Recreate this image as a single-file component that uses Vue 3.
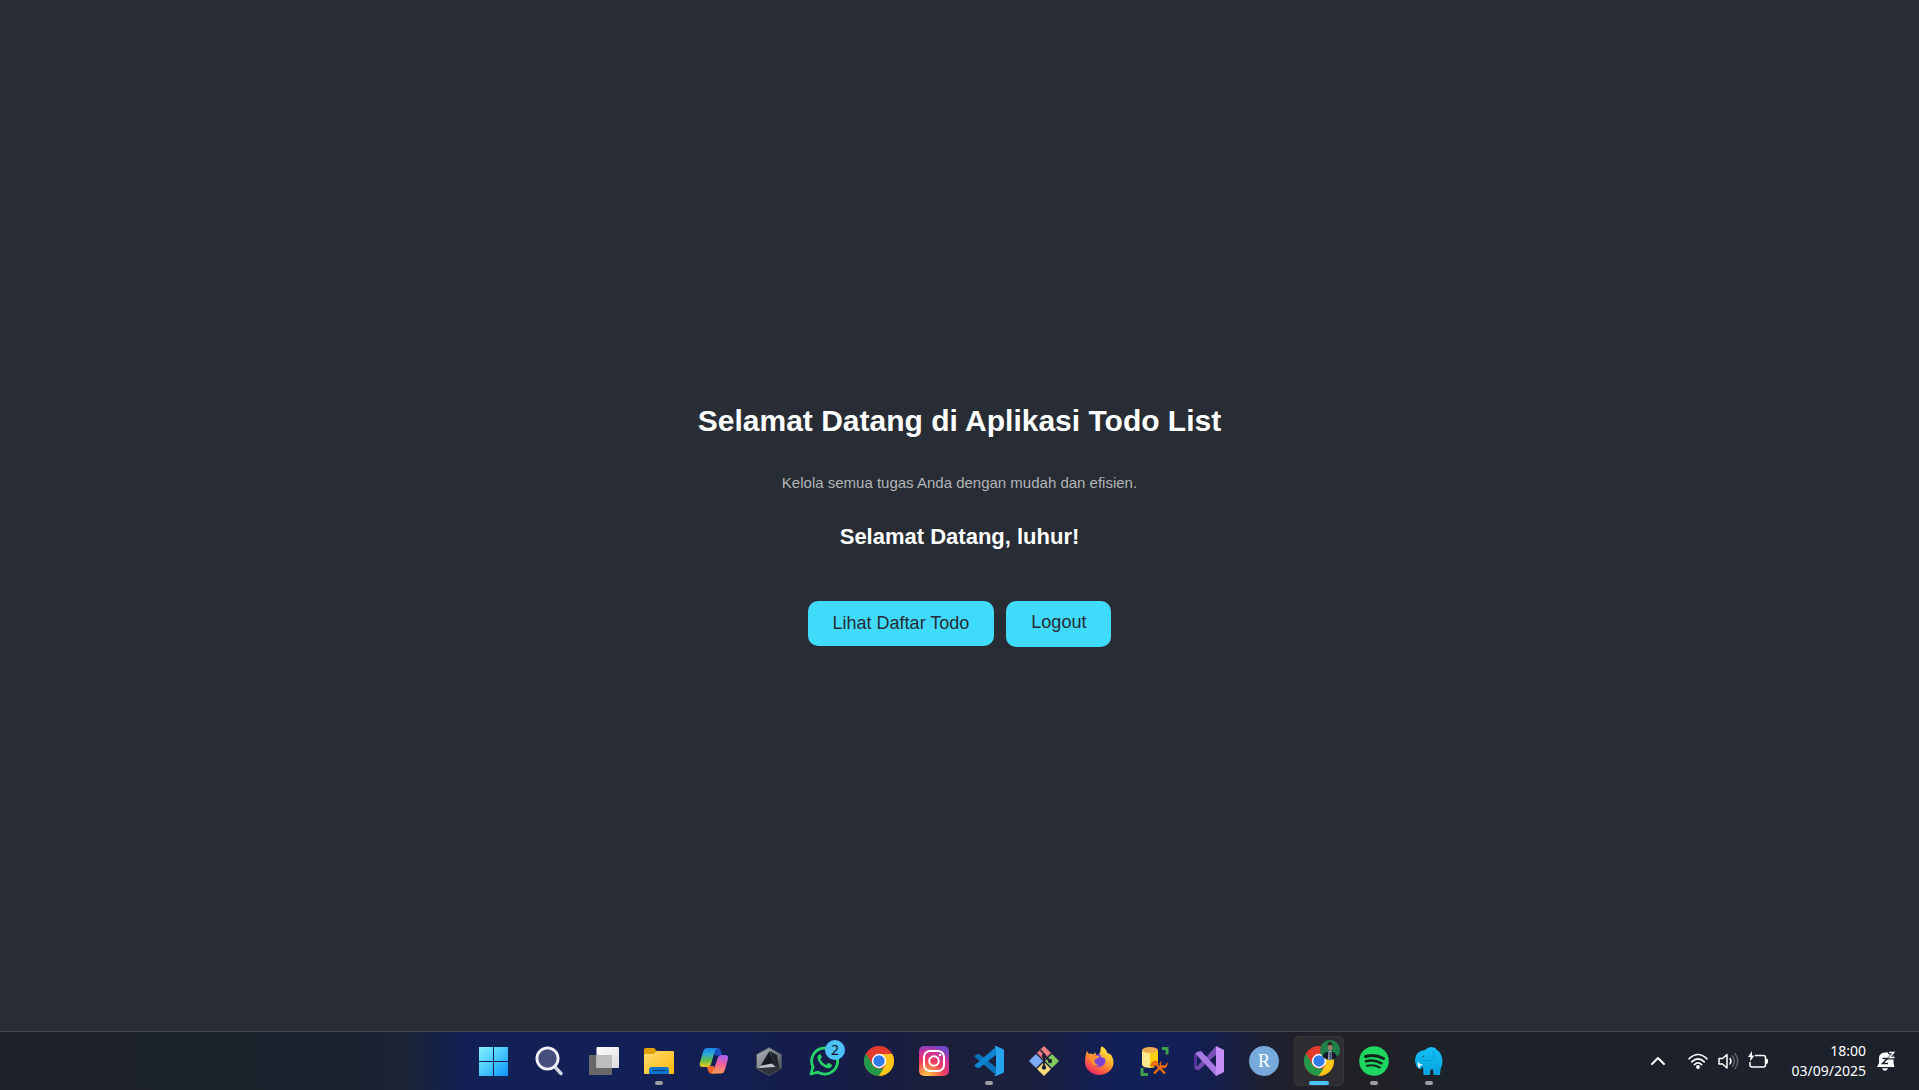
<script setup>
import { ref } from 'vue'

const username = ref('luhur')

const apps = [
  { id: 'start', label: 'Start' },
  { id: 'search', label: 'Search' },
  { id: 'taskview', label: 'Task View' },
  { id: 'explorer', label: 'File Explorer', running: true },
  { id: 'copilot', label: 'Copilot' },
  { id: 'crate', label: 'Armoury Crate' },
  { id: 'whatsapp', label: 'WhatsApp', badge: 2 },
  { id: 'chrome', label: 'Google Chrome' },
  { id: 'instagram', label: 'Instagram' },
  { id: 'vscode', label: 'Visual Studio Code', running: true },
  { id: 'git', label: 'Git Bash' },
  { id: 'firefox', label: 'Firefox' },
  { id: 'sql', label: 'SQL Server Management Studio' },
  { id: 'vs', label: 'Visual Studio' },
  { id: 'rstudio', label: 'RStudio' },
  { id: 'profile', label: 'Google Chrome profile', active: true },
  { id: 'spotify', label: 'Spotify', running: true },
  { id: 'laragon', label: 'Laragon', running: true },
]
</script>

<template>
  <div class="screen">
    <main class="home">
      <h1>Selamat Datang di Aplikasi Todo List</h1>
      <p>Kelola semua tugas Anda dengan mudah dan efisien.</p>
      <h2>Selamat Datang, {{ username }}!</h2>
      <div class="actions">
        <a class="action" href="#todos">Lihat Daftar Todo</a>
        <button class="action logout" type="button">Logout</button>
      </div>
    </main>

    <footer class="taskbar">
      <nav class="apps" aria-label="Taskbar">
        <button
          v-for="app in apps"
          :key="app.id"
          class="app"
          :class="{ running: app.running, active: app.active }"
          type="button"
          :aria-label="app.label"
        >
          <svg v-if="app.id === 'start'" viewBox="0 0 30 30">
            <defs>
              <linearGradient id="win" x1="0" y1="0" x2="30" y2="30" gradientUnits="userSpaceOnUse">
                <stop offset="0" stop-color="#84f4ff" /><stop offset=".5" stop-color="#49c8fb" /><stop offset="1" stop-color="#0a90fb" />
              </linearGradient>
            </defs>
            <path fill="url(#win)" d="M0 1h14v14H0zM15 1h14v14H15zM0 16h14v14H0zM15 16h14v14H15z" />
          </svg>

          <svg v-else-if="app.id === 'search'" viewBox="0 0 30 30">
            <path d="M20.5 20.5l6.5 7" stroke="#d3d7e2" stroke-width="3.4" stroke-linecap="round" />
            <circle cx="13.5" cy="12.5" r="10.6" fill="#464f7c" stroke="#f1f2f5" stroke-width="2.8" />
          </svg>

          <svg v-else-if="app.id === 'taskview'" viewBox="0 0 30 30">
            <defs><linearGradient id="tv" x2="1" y2="1"><stop stop-color="#fff" /><stop offset="1" stop-color="#dcdcdf" /></linearGradient></defs>
            <rect x="0" y="9" width="23" height="20" rx="1" fill="#686868" />
            <rect x="7.5" y="1" width="22.5" height="21" rx="1" fill="url(#tv)" />
            <path d="M7.500 9H23v13H8.500a1 1 0 0 1-1-1z" fill="#bdbdbe" />
          </svg>

          <svg v-else-if="app.id === 'explorer'" viewBox="0 0 30 30">
            <defs><linearGradient id="fe" x2="1" y2="1"><stop stop-color="#ffdc72" /><stop offset="1" stop-color="#ffb90b" /></linearGradient></defs>
            <path d="M0 3.500Q0 2 1.500 2H10l3 3h15.500Q30 5 30 6.500V12H0z" fill="#dfa009" />
            <path d="M0 8h9.500l3.500-3h15.500Q30 5 30 6.500V27.500Q30 28 29 28H1Q0 28 0 27z" fill="url(#fe)" />
            <path d="M5 28v-4q0-3 3-3h14q3 0 3 3v4z" fill="#0c76cc" />
            <path d="M8.500 24.500h13" stroke="#0a3f78" stroke-width="1.200" />
          </svg>

          <svg v-else-if="app.id === 'copilot'" viewBox="0 0 30 30">
            <defs>
              <linearGradient id="cp1" x1="0" y1="0" x2="0" y2="1"><stop stop-color="#1680e8" /><stop offset=".3" stop-color="#2ba6dc" /><stop offset=".65" stop-color="#63c04d" /><stop offset="1" stop-color="#f2c71c" /></linearGradient>
              <linearGradient id="cp2" x1=".6" y1="0" x2=".4" y2="1"><stop stop-color="#a262f0" /><stop offset=".45" stop-color="#ee5f9f" /><stop offset="1" stop-color="#ff9b52" /></linearGradient>
            </defs>
            <path d="M14 2h5q2 0 3 3l1.200 4.500H16z" fill="#1a4fc0" />
            <path d="M16 27.500h-4q-2 0-3-3L7.500 20H15z" fill="#f0632f" />
            <path d="M8 2h11q-2 0-3 3l-4 13q-1 3-4 3H3.500Q0 21 .8 17L4 6q1-4 4-4z" fill="url(#cp1)" />
            <path d="M22 27.500H11.500q2 0 3-3l4-12q1-3.500 4-3.500H26q4 0 3 4L26 23.500q-1 4-4 4z" fill="url(#cp2)" />
          </svg>

          <svg v-else-if="app.id === 'crate'" viewBox="0 0 30 30">
            <defs><linearGradient id="ac" y2="1" x2="1"><stop stop-color="#b4b9c0" /><stop offset=".5" stop-color="#7b8088" /><stop offset="1" stop-color="#3a3e46" /></linearGradient></defs>
            <path d="M15 1.500l12.500 7v14L15 29.500l-12.500-7v-14z" fill="url(#ac)" stroke="#4a4e57" />
            <path d="M3 22l17-1.500 7 2L15 29z" fill="#2f333b" />
            <path d="M15.500 5L6.500 20l12-2 3 2z" fill="#151922" />
            <path d="M4 22l17-1-3-3.500L7.500 19.500z" fill="#c0c4ca" />
            <path d="M16 5l5.500 15 3.500 2-2-13z" fill="#1d222b" />
          </svg>

          <svg v-else-if="app.id === 'whatsapp'" viewBox="0 0 30 30">
            <path d="M2 28l2-7.200A13 13 0 1 1 9 26.200z" fill="none" stroke="#25d366" stroke-width="2.800" stroke-linejoin="round" />
            <path d="M10.500 8.500c-1.500.5-2.500 2-2 4 1 5 6.500 9.500 11 9.700 2 0 3.700-1.600 3.500-3.500l-3.600-2-2.100 2.200c-2.800-1.200-4.800-3-6-5.900l1.700-1.700-1.400-3z" fill="#25d366" />
          </svg>

          <svg v-else-if="app.id === 'chrome' || app.id === 'profile'" viewBox="0 0 30 30">
            <circle cx="15" cy="15" r="15" fill="#e33b2e" />
            <path d="M15 8h13.300A15 15 0 0 1 14.500 30l7-11.250z" fill="#fdc71a" />
            <path d="M2 7.500l6.500 11.250Q11 23 15 22.500h4.500L14.500 30A15 15 0 0 1 2 7.500z" fill="#229a4c" />
            <circle cx="15" cy="15" r="7.200" fill="#fff" />
            <circle cx="15" cy="15" r="5.700" fill="#327bea" />
          </svg>

          <svg v-else-if="app.id === 'instagram'" viewBox="0 0 30 30">
            <defs>
              <radialGradient id="ig" cx=".27" cy="1.050" r="1.100"><stop stop-color="#ffd45c" /><stop offset=".2" stop-color="#fba13f" /><stop offset=".5" stop-color="#f03e5b" /><stop offset=".8" stop-color="#c9329c" /><stop offset="1" stop-color="#6f49c9" /></radialGradient>
            </defs>
            <rect width="30" height="30" rx="5" fill="url(#ig)" />
            <rect x="5" y="5" width="20" height="20" rx="6" fill="none" stroke="#fff" stroke-width="2" />
            <circle cx="15" cy="15" r="4.800" fill="none" stroke="#fff" stroke-width="2" />
            <circle cx="21" cy="9" r="1.300" fill="#fff" />
          </svg>

          <svg v-else-if="app.id === 'vscode'" viewBox="0 0 30 30">
            <path d="M1 9.500L3.500 8q1-.5 2 .3L23 22v7.500q-1-.2-2-1.200L.8 11q-.6-.8.200-1.500z" fill="#0a70b8" />
            <path d="M1 20.500L3.500 22q1 .5 2-.3L23 8V.5q-1 .2-2 1.200L.8 19q-.6.800.200 1.500z" fill="#0d84cf" />
            <path d="M22 0l7 3q1 .5 1 1.700v20.600q0 1.200-1 1.700l-7 3q-1 .2-2-.8 2 .2 2-1.800V2.600q0-2-2-1.800 1-1 2-.8z" fill="#27a4f0" />
          </svg>

          <svg v-else-if="app.id === 'git'" viewBox="0 0 30 30">
            <g stroke-width="1" stroke-linejoin="round">
              <path d="M15 .5L21.500 7 15 13.500 8.500 7z" fill="#f27f82" stroke="#f27f82" />
              <path d="M7 8.500l6.500 6.500L7 21.500.5 15z" fill="#7eadf8" stroke="#7eadf8" />
              <path d="M23 8.500l6.500 6.500-6.500 6.500-6.500-6.500z" fill="#86cb60" stroke="#86cb60" />
              <path d="M15 16.500l6.500 6.500-6.500 6.500L8.500 23z" fill="#fadc7c" stroke="#fadc7c" />
            </g>
            <path d="M11.500 4L15 8v14M15 9l6 6" fill="none" stroke="#1d2037" stroke-width="1.800" />
            <circle cx="15" cy="10" r="2.200" fill="#1d2037" /><circle cx="21" cy="15" r="2.200" fill="#1d2037" /><circle cx="15" cy="21.500" r="2.200" fill="#1d2037" />
          </svg>

          <svg v-else-if="app.id === 'firefox'" viewBox="0 0 30 30">
            <defs>
              <linearGradient id="ff" x1=".85" y1="0" x2=".25" y2="1"><stop stop-color="#fff04a" /><stop offset=".35" stop-color="#ffbd2f" /><stop offset=".65" stop-color="#ff7139" /><stop offset="1" stop-color="#ec1f6c" /></linearGradient>
            </defs>
            <path d="M18 .5c3 1.500 4.500 3.500 5 6 1 .4 1.500 1 2 2l1-1c2.500 3 3.500 6 3.500 9a14.200 12.500 0 0 1-28.400 0c0-5 .4-8 1.900-11.500l2 3q2.500-1 4 .5l2.500-2 .5 3c2 0 3-1 4-3 1-2 0-4 1.500-6z" fill="url(#ff)" />
            <circle cx="15" cy="14.500" r="6.500" fill="#7a43d6" />
            <path d="M6.500 9.500c4-1.500 6 .5 9 .5-1 3-4 2-5 4 0 3 2 5 5 5-5 2-10-1-9-9.500z" fill="#ff932f" />
            <path d="M16 8q5 1 6 6-2-3-5-3z" fill="#ffb92e" />
          </svg>

          <svg v-else-if="app.id === 'sql'" viewBox="0 0 30 30">
            <path d="M23 2.500h5v6M3 22v6.500h6" fill="none" stroke="#3ea04a" stroke-width="3" />
            <path d="M3 4.500v14q0 3 8 3.500V4.500z" fill="#ffe98c" /><path d="M11 4.500v17.500q8-.5 8-3.500v-14z" fill="#fbd008" />
            <ellipse cx="11" cy="4" rx="8" ry="3" fill="#eeaa4f" />
            <path d="M13 17l13 10" stroke="#1b2255" stroke-width="3.500" />
            <path d="M15 27.500l8-8M17 18l9 9.500" stroke="#ed6c0b" stroke-width="2.300" />
            <path d="M11 19.500q2-5 7-5l1 2.500-4 4-1.500-1.500-1 1zM22.500 15l-.5 4 4 .5 2.500-3.500q.5 5-2.500 6t-5-2 1.500-5z" fill="#ed6c0b" />
          </svg>

          <svg v-else-if="app.id === 'vs'" viewBox="0 0 30 30">
            <path d="M0 8l3-2v18l-3-2z" fill="#52329c" />
            <path d="M0 8l3-2 11.500 9L5 24.500 0 22V20l3 .5 4.500-5.500L3 10z" fill="#5f3f97" />
            <path d="M3 24l19-15V0L8 16 1 23z" fill="#7650b5" />
            <path d="M3 6l4-1L22 21v9L2 8z" fill="#a979e3" />
            <path d="M22 0l8 4v22l-8 4z" fill="#c68ef7" />
          </svg>

          <svg v-else-if="app.id === 'rstudio'" viewBox="0 0 30 30">
            <circle cx="15" cy="15" r="15" fill="#75aadb" />
            <text x="15" y="21" text-anchor="middle" class="r-letter">R</text>
          </svg>

          <svg v-else-if="app.id === 'spotify'" viewBox="0 0 30 30">
            <circle cx="15" cy="15" r="14.800" fill="#1ed760" />
            <g fill="none" stroke="#16231d" stroke-linecap="round">
              <path d="M6.500 10.500c6-1.700 12.500-1 18 2" stroke-width="3" />
              <path d="M7 15.300c5-1.400 10.500-.8 15.500 2" stroke-width="2.500" />
              <path d="M7.800 19.800c4.500-1 9-.5 13 1.700" stroke-width="2" />
            </g>
          </svg>

          <svg v-else viewBox="0 0 30 30">
            <defs><linearGradient id="el" x2="0" y2="1"><stop stop-color="#12c1f5" /><stop offset="1" stop-color="#08a1df" /></linearGradient></defs>
            <path d="M11 4q4-4 9-2.500 2 .5 3 2.500 5 3 5.500 11 0 4-2 8.500l-.5 5.500h-6.500l-.5-5.500h-2.500L16 29H9.500L9 20.500Q7 24 4.500 22.500 1 20 1 13 2 5 11 4z" fill="url(#el)" />
            <path d="M19 4.500q3 7-1 9.500-4 2.500-9-.5" fill="none" stroke="#0898d6" stroke-width="1" />
            <circle cx="9" cy="10.500" r=".9" fill="#0a6c9c" />
            <path d="M4 16q2 2.500 4.500 2.500-.5 1.500-2.500 1l-.5 3q-2.500-2.500-1.500-6.500z" fill="#fff" />
          </svg>

          <span v-if="app.badge" class="badge">{{ app.badge }}</span>
          <svg v-if="app.id === 'profile'" class="avatar" viewBox="0 0 20 20">
            <defs><clipPath id="av"><circle cx="10" cy="10" r="10" /></clipPath></defs>
            <g clip-path="url(#av)">
              <path d="M0 0h20v20H0z" fill="#208049" />
              <path d="M2 21q0-8 5-9l3-1 3 1q4 1 5 9z" fill="#151a2a" />
              <path d="M8.500 11h3l.5 9H8z" fill="#aab2c4" />
              <path d="M9.500 12h1.500l.5 7-1 1-1-1z" fill="#3c4a62" />
              <ellipse cx="10" cy="7" rx="2.300" ry="3.500" fill="#a07d6c" />
              <path d="M7.500 6q0-4 2.500-4t2.500 4q-2.500-2-5 0z" fill="#2c2425" />
            </g>
          </svg>
        </button>
      </nav>

      <div class="tray">
        <button class="tray-button" type="button" aria-label="Show hidden icons">
          <svg width="14" height="20" viewBox="0 0 14 20"><path d="M1 13l6-6 6 6" fill="none" stroke="#fff" stroke-width="2" stroke-linecap="round" stroke-linejoin="round" /></svg>
        </button>
        <button class="tray-button status" type="button" aria-label="Network, volume and battery">
          <svg width="20" height="20" viewBox="0 0 20 20">
            <g fill="none" stroke="#fff" stroke-width="1.600" stroke-linecap="round">
              <path d="M1 7.800q9-8.600 18 0M3.700 10.800q6.300-6 12.600 0M6.400 13.600q3.600-3.400 7.200 0" />
            </g>
            <circle cx="10" cy="16" r="1.900" fill="#fff" />
          </svg>
          <svg width="20" height="20" viewBox="0 0 20 20">
            <path d="M1 7.500h3.500L9 3.500v13.500L4.500 13H1z" fill="none" stroke="#fff" stroke-width="1.500" stroke-linejoin="round" />
            <path d="M12 7.500q2 2.700 0 5.400" fill="none" stroke="#fff" stroke-width="1.500" stroke-linecap="round" />
            <path d="M14.500 5q4 5.200 0 10.400M17 2.500q5.500 7.700 0 15.400" fill="none" stroke="#60646c" stroke-width="1.400" stroke-linecap="round" />
          </svg>
          <svg width="20" height="20" viewBox="0 0 20 20">
            <path d="M7 4.500h8.500q2 0 2 2v7.500q0 2-2 2H4q-2 0-2-2V11" fill="none" stroke="#fff" stroke-width="1.500" />
            <path d="M18 7.500q2 .3 2 1.500v2.500q0 1.200-2 1.500z" fill="#fff" />
            <path d="M4 0L0 6h2.500L2 10.500 6.500 4.500H4z" fill="#fff" />
          </svg>
        </button>
        <button class="tray-button clock" type="button">
          <time datetime="18:00">18:00</time>
          <time datetime="2025-09-03">03/09/2025</time>
        </button>
        <button class="tray-button" type="button" aria-label="Notifications">
          <svg width="18" height="20" viewBox="0 0 18 20">
            <path d="M8 1.500h4v2h4.500V9v3l1 4H0l2-4V7q0-5 6-5.500z" fill="#fff" />
            <path d="M5 17.200h6q-1 2.500-3 2.500t-3-2.500z" fill="#fff" />
            <path d="M5.500 7.500h5l-5 5H11" fill="none" stroke="#1c212b" stroke-width="1.500" />
            <path d="M11 1.500h6l-4.500 5.500H17" fill="none" stroke="#1c212b" stroke-width="3" />
            <path d="M12 1.500h4.800L12.500 6.500h5" fill="none" stroke="#fff" stroke-width="1.300" />
          </svg>
        </button>
      </div>
    </footer>
  </div>
</template>

<style>
body {
  margin: 0;
  background: #282c34;
}
</style>

<style scoped>
.screen {
  display: flex;
  flex-direction: column;
  min-height: 100vh;
  background: #282c34;
  color: #fff;
  font-family: Arial, "Liberation Sans", sans-serif;
}

.home {
  flex: 1;
  display: flex;
  flex-direction: column;
  align-items: center;
  justify-content: center;
  padding-top: 18px;
  text-align: center;
}

h1,
h2,
p {
  margin: 0;
}

h1 {
  margin-bottom: 34px;
  font-size: 30px;
  line-height: 38px;
}

p {
  margin-bottom: 31px;
  color: #b3b5b8;
  font-size: 15px;
  line-height: 18px;
}

h2 {
  margin-bottom: 50px;
  font-size: 22px;
  line-height: 28px;
}

.actions {
  display: flex;
  align-items: flex-start;
  gap: 12px;
}

.action {
  padding: 12px 25px;
  border: 0;
  border-radius: 10px;
  background: #40dafb;
  color: #282c34;
  font-family: inherit;
  font-size: 18px;
  line-height: 21px;
  text-decoration: none;
  cursor: pointer;
}

.action.logout {
  padding: 11px 25px 14px;
}

.taskbar {
  display: grid;
  grid-template-columns: 1fr auto 1fr;
  align-items: center;
  padding: 4px 0;
  border-top: 1px solid #42454b;
  background: linear-gradient(
    90deg,
    #1e2229 0%,
    #1b222d 16%,
    #1a2434 21%,
    #132055 24%,
    #132057 33%,
    #141d4c 42%,
    #1b1f3a 49%,
    #1a1f3e 54%,
    #122059 58%,
    #121f58 62%,
    #1e2030 66%,
    #212124 70%,
    #1c212b 76%,
    #1c212b 100%
  );
}

.apps {
  grid-column: 2;
  display: flex;
  gap: 5px;
  margin-left: 4px;
}

.app {
  position: relative;
  display: grid;
  place-items: center;
  width: 50px;
  height: 50px;
  padding: 0;
  border: 1px solid transparent;
  border-radius: 5px;
  background: none;
}

.app > svg {
  width: 30px;
  height: 30px;
}

.app.active {
  border-color: #38383c;
  background: #2e2e32;
}

.app.running::after,
.app.active::after {
  content: "";
  position: absolute;
  bottom: 0;
  width: 8px;
  height: 4px;
  border-radius: 2px;
  background: #9c9da3;
}

.app.active::after {
  width: 20px;
  background: #4cc2ff;
}

.badge {
  position: absolute;
  top: 3px;
  right: 3px;
  width: 20px;
  height: 20px;
  border-radius: 50%;
  background: #4cc2ff;
  color: #111;
  font: 14px/20px "Noto Sans", sans-serif;
}

.app > .avatar {
  position: absolute;
  top: 3px;
  right: 3px;
  width: 20px;
  height: 20px;
}

.r-letter {
  fill: #fff;
  font: 18px "Liberation Serif", serif;
}

.tray {
  display: flex;
  align-items: center;
  justify-content: flex-end;
  padding-right: 24px;
}

.tray-button {
  display: flex;
  padding: 0;
  border: 0;
  background: none;
  color: #fff;
}

.tray-button svg {
  overflow: visible;
}

.status {
  gap: 10px;
  margin: 0 24px 0 23px;
}

.clock {
  flex-direction: column;
  align-items: flex-end;
  margin-right: 11px;
  font: 14px/20px "Noto Sans", sans-serif;
}
</style>
